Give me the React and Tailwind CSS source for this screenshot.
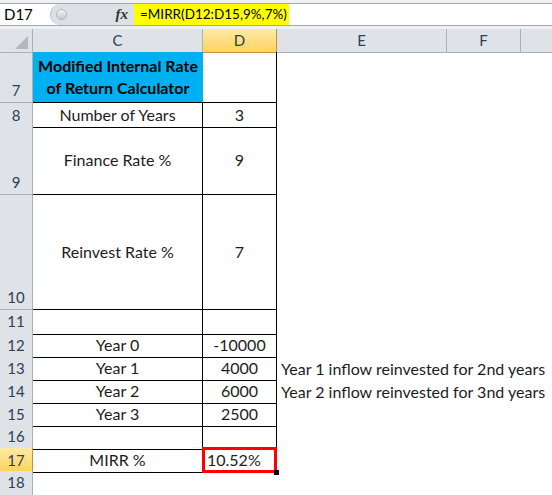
import React from 'react';

const COLS = 'grid grid-cols-[33px_170px_74px_170px_74px_1fr]';
const font = { fontFamily: 'Lato, "Liberation Sans", sans-serif' };

const hdr = 'bg-[#dfe3e8] border-r border-b border-[#a9b1bb] text-[#2b3f57]';
const hdrSel = 'bg-gradient-to-b from-[#ffe9a6] to-[#fdd35a] border-r border-b border-[#c2923c] text-[#2b3f57]';

const RowHead = ({ n, selected }) => (
  <div className={`${selected ? hdrSel : hdr} flex items-end justify-center pb-[1px] text-[15px]`}>{n}</div>
);

const Tc = ({ children, className = '' }) => (
  <div className={`border-r border-b border-black flex items-center justify-center ${className}`}>{children}</div>
);

const rows = [
  { n: 8, h: 'h-[23px]', c: 'Number of Years', d: '3' },
  { n: 9, h: 'h-[69px]', c: 'Finance Rate %', d: '9' },
  { n: 10, h: 'h-[115px]', c: 'Reinvest Rate %', d: '7' },
  { n: 11, h: 'h-[23px]', c: '', d: '' },
  { n: 12, h: 'h-[23px]', c: 'Year 0', d: '-10000' },
  { n: 13, h: 'h-[23px]', c: 'Year 1', d: '4000', e: 'Year 1 inflow reinvested for 2nd years' },
  { n: 14, h: 'h-[23px]', c: 'Year 2', d: '6000', e: 'Year 2 inflow reinvested for 3nd years' },
  { n: 15, h: 'h-[23px]', c: 'Year 3', d: '2500' },
  { n: 16, h: 'h-[23px]', c: '', d: '' },
];

export default function App() {
  return (
    <div className="w-[552px] h-[495px] overflow-hidden bg-white text-[16px] text-[#1c1c1c]" style={font}>
      {/* formula bar */}
      <div className="h-[29px] bg-[#eef0f3] pt-[3px]">
        <div className="h-[23px] flex border-t border-b border-[#a3a8ae] bg-white text-[14px]">
          <div className="w-[50px] pl-[4px] flex items-center text-black text-[15px]">D17</div>
          <div className="w-[84px] bg-[#dde1e6] rounded-l-full border-l border-[#b8bdc4] flex items-center justify-between pl-[5px] pr-[6px]">
            <div className="w-[11px] h-[11px] rounded-full bg-gradient-to-b from-[#f2f3f5] to-[#c5c9cf] border border-[#b0b5bc]" />
            <span className="italic font-bold text-[#333] text-[15px]" style={{ fontFamily: '"Liberation Serif", serif' }}>fx</span>
          </div>
          <div className="bg-[#ffff00] pl-[6px] pr-[2px] flex items-center text-black text-[13.5px]">=MIRR(D12:D15,9%,7%)</div>
          <div className="flex-1" />
        </div>
      </div>

      {/* column headers */}
      <div className={`${COLS} h-[23px] text-[15px]`}>
        <div className={`${hdr} relative`}>
          <div className="absolute right-[4px] bottom-[3px] w-0 h-0 border-l-[13px] border-l-transparent border-b-[13px] border-b-[#b3b8be]" />
        </div>
        <div className={`${hdr} flex items-center justify-center`}>C</div>
        <div className={`${hdrSel} flex items-center justify-center`}>D</div>
        <div className={`${hdr} flex items-center justify-center`}>E</div>
        <div className={`${hdr} flex items-center justify-center`}>F</div>
        <div className={`${hdr} border-r-0`} />
      </div>

      {/* row 7 */}
      <div className={`${COLS} h-[51px]`}>
        <RowHead n={7} />
        <div className="bg-[#00b0f0] border-b border-black flex items-end justify-center text-center font-bold text-black leading-[22px] pb-[3px]">
          Modified Internal Rate<br />of Return Calculator
        </div>
        <div className="border-r border-b border-black" />
        <div />
        <div />
        <div />
      </div>

      {rows.map((r) => (
        <div key={r.n} className={`${COLS} ${r.h}`}>
          <RowHead n={r.n} />
          <Tc>{r.c}</Tc>
          <Tc>{r.d}</Tc>
          <div className="flex items-center pl-[4px] whitespace-nowrap overflow-visible">{r.e}</div>
          <div />
          <div />
        </div>
      ))}

      {/* row 17 */}
      <div className={`${COLS} h-[23px]`}>
        <RowHead n={17} selected />
        <Tc>MIRR %</Tc>
        <div className="relative border-r border-b border-black flex items-center pl-[4px]">
          10.52%
          <div className="absolute -left-[1px] -top-[1px] right-[-1px] bottom-[-1px] border-[3px] border-[#ff0000]" />
          <div className="absolute -right-[3px] -bottom-[3px] w-[5px] h-[5px] bg-black" />
        </div>
        <div />
        <div />
        <div />
      </div>

      {/* row 18 */}
      <div className={`${COLS} h-[23px]`}>
        <RowHead n={18} />
        <div />
        <div />
        <div />
        <div />
        <div />
      </div>
    </div>
  );
}
